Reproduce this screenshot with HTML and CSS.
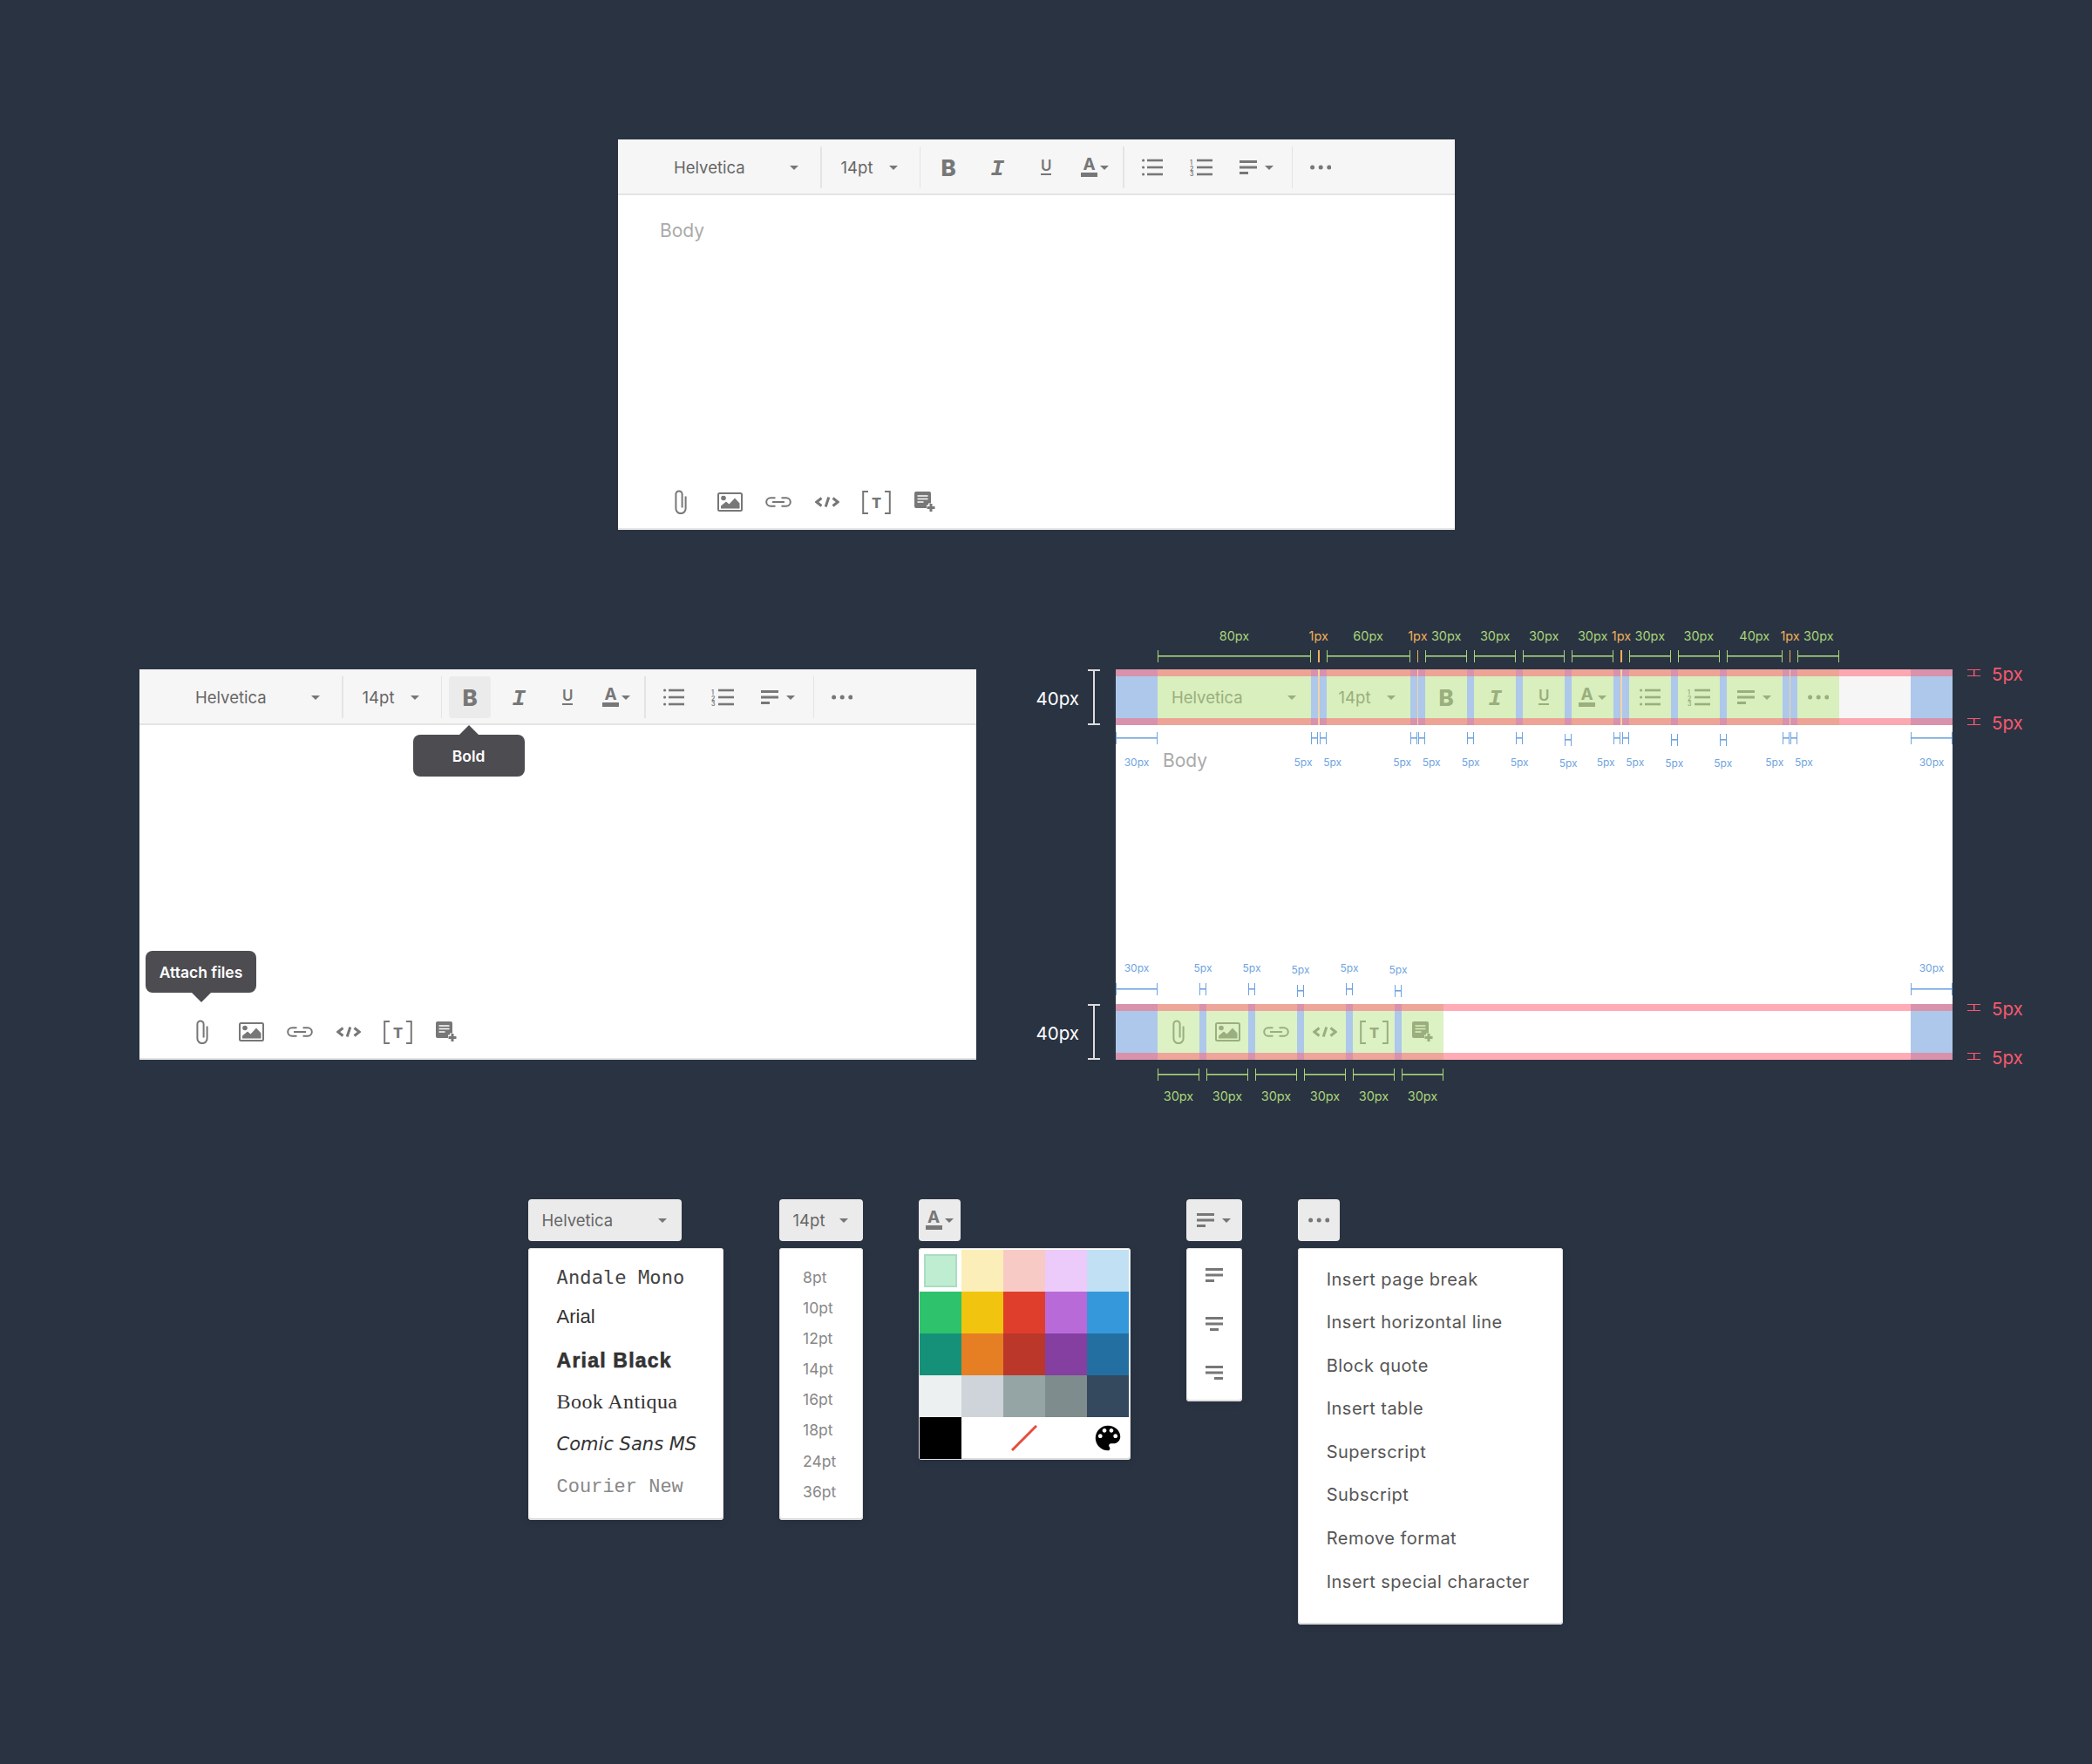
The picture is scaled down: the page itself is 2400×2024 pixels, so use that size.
FILE: index.html
```html
<!DOCTYPE html>
<html lang="en">
<head>
    <meta charset="UTF-8">
    <title>Editor toolbar spec</title>
    <link rel="stylesheet" href="styles.css">
</head>
<body>
<svg class="defs" aria-hidden="true">
    <symbol id="i-ul" viewBox="0 0 24 20">
        <circle cx="1.6" cy="2" r="1.6"/><circle cx="1.6" cy="10" r="1.6"/><circle cx="1.6" cy="18" r="1.6"/>
        <rect x="6" y=".7" width="18" height="2.6"/><rect x="6" y="8.7" width="18" height="2.6"/><rect x="6" y="16.7" width="18" height="2.6"/>
    </symbol>
    <symbol id="i-ol" viewBox="0 0 26 20">
        <rect x="8" y=".7" width="18" height="2.6"/><rect x="8" y="8.7" width="18" height="2.6"/><rect x="8" y="16.7" width="18" height="2.6"/>
    </symbol>
    <symbol id="i-left" viewBox="0 0 20 16">
        <rect width="20" height="3"/><rect y="6.5" width="20" height="3"/><rect y="13" width="10" height="3"/>
    </symbol>
    <symbol id="i-center" viewBox="0 0 20 16">
        <rect width="20" height="3"/><rect y="6.5" width="20" height="3"/><rect x="5" y="13" width="10" height="3"/>
    </symbol>
    <symbol id="i-right" viewBox="0 0 20 16">
        <rect width="20" height="3"/><rect y="6.5" width="20" height="3"/><rect x="10" y="13" width="10" height="3"/>
    </symbol>
    <symbol id="i-dots" viewBox="0 0 24 6">
        <circle cx="2.6" cy="3" r="2.5"/><circle cx="12.2" cy="3" r="2.5"/><circle cx="21.8" cy="3" r="2.5"/>
    </symbol>
    <symbol id="i-clip" viewBox="0 0 14 28">
        <path class="line" d="M12.600 7.500V21.500a5.600 5.600 0 0 1-11.200 0V5a3.600 3.600 0 0 1 7.200 0V20.500"/>
    </symbol>
    <symbol id="i-image" viewBox="0 0 29 22">
        <rect class="line" x="1" y="1" width="27" height="20" rx="1.5"/>
        <circle cx="7" cy="6.500" r="2.800"/>
        <path d="M4 18.500V15.500L10 10.500l3.500 3L20 6.500l5.500 6v6z"/>
    </symbol>
    <symbol id="i-link" viewBox="0 0 32 12">
        <path class="line" d="M12.500 1.200H7a4.800 4.800 0 0 0 0 9.600h5.500M19.500 1.200H25a4.800 4.800 0 0 1 0 9.600h-5.500M9 6h14"/>
    </symbol>
    <symbol id="i-code" viewBox="0 0 28 12">
        <path class="line thick" d="M7.500 1.500L1.800 6l5.700 4.500M20.500 1.500L26.200 6l-5.700 4.500M15.800.5L12.200 11.500"/>
    </symbol>
    <symbol id="i-bracket" viewBox="0 0 33 27">
        <path class="line" d="M7 1H1.200v25H7M26 1h5.800v25H26"/>
    </symbol>
    <symbol id="i-note" viewBox="0 0 24 24">
        <rect width="19" height="19" rx="2"/>
        <path class="hole" d="M3.500 5h12M3.500 8.500h12M3.500 12h7"/>
        <path class="hole wide" d="M19 13.500v10M14 18.500h10"/>
        <path class="line thick" d="M19 14v9M14.500 18.500h9"/>
    </symbol>
    <symbol id="i-palette" viewBox="0 0 24 24">
        <path d="M12 3c-4.970 0-9 4.030-9 9s4.030 9 9 9c.830 0 1.500-.670 1.500-1.500 0-.390-.150-.740-.390-1.010-.230-.260-.380-.610-.380-.990 0-.830.670-1.500 1.500-1.500H16c2.760 0 5-2.240 5-5 0-4.420-4.030-8-9-8zm-5.500 9c-.830 0-1.500-.670-1.500-1.500S5.670 9 6.500 9 8 9.670 8 10.500 7.330 12 6.500 12zm3-4C8.670 8 8 7.330 8 6.500S8.670 5 9.500 5s1.500.670 1.500 1.500S10.330 8 9.500 8zm5 0c-.830 0-1.500-.670-1.500-1.500S13.670 5 14.500 5s1.500.670 1.500 1.500S15.330 8 14.500 8zm3 4c-.830 0-1.500-.670-1.500-1.500S16.670 9 17.500 9s1.500.670 1.500 1.500-.670 1.500-1.500 1.500z"/>
    </symbol>
</svg>

<!-- plain editor -->
<section class="row-top">
    <div class="editor">
        <div class="toolbar">
            <div class="tool w-font drop"><span>Helvetica</span><i class="caret"></i></div>
            <div class="sep"></div>
            <div class="tool w-size drop"><span>14pt</span><i class="caret"></i></div>
            <div class="sep"></div>
            <div class="tool glyph-b">B</div>
            <div class="tool glyph-i">I</div>
            <div class="tool glyph-u"><span>U</span></div>
            <div class="tool"><span class="color-a">A</span><i class="caret small"></i></div>
            <div class="sep"></div>
            <div class="tool"><svg class="ic-ul"><use href="#i-ul"/></svg></div>
            <div class="tool"><svg class="ic-ol" viewBox="0 -4 26 28"><use href="#i-ol" width="26" height="20"/><text x="0" y="6.500" class="tiny">1</text><text x="0" y="13.500" class="tiny">2</text><text x="0" y="20" class="tiny">3</text></svg></div>
            <div class="tool w-align"><svg class="ic-align"><use href="#i-left"/></svg><i class="caret small"></i></div>
            <div class="sep"></div>
            <div class="tool"><svg class="ic-dots"><use href="#i-dots"/></svg></div>
        </div>
        <div class="content"><span class="placeholder">Body</span></div>
        <div class="bottombar">
            <div class="tool"><svg class="ic-clip"><use href="#i-clip"/></svg></div>
            <div class="tool"><svg class="ic-image"><use href="#i-image"/></svg></div>
            <div class="tool"><svg class="ic-link"><use href="#i-link"/></svg></div>
            <div class="tool"><svg class="ic-code"><use href="#i-code"/></svg></div>
            <div class="tool"><svg class="ic-bracket" viewBox="0 0 33 27"><use href="#i-bracket"/><text x="16.500" y="19.800" class="tee">T</text></svg></div>
            <div class="tool"><svg class="ic-note"><use href="#i-note"/></svg></div>
        </div>
    </div>
</section>

<section class="row-mid">
    <!-- tooltips -->
    <div class="editor editor-tips">
        <div class="toolbar">
            <div class="tool w-font drop"><span>Helvetica</span><i class="caret"></i></div>
            <div class="sep"></div>
            <div class="tool w-size drop"><span>14pt</span><i class="caret"></i></div>
            <div class="sep"></div>
            <div class="tool glyph-b active">B</div>
            <div class="tool glyph-i">I</div>
            <div class="tool glyph-u"><span>U</span></div>
            <div class="tool"><span class="color-a">A</span><i class="caret small"></i></div>
            <div class="sep"></div>
            <div class="tool"><svg class="ic-ul"><use href="#i-ul"/></svg></div>
            <div class="tool"><svg class="ic-ol" viewBox="0 -4 26 28"><use href="#i-ol" width="26" height="20"/><text x="0" y="6.500" class="tiny">1</text><text x="0" y="13.500" class="tiny">2</text><text x="0" y="20" class="tiny">3</text></svg></div>
            <div class="tool w-align"><svg class="ic-align"><use href="#i-left"/></svg><i class="caret small"></i></div>
            <div class="sep"></div>
            <div class="tool"><svg class="ic-dots"><use href="#i-dots"/></svg></div>
        </div>
        <div class="content"></div>
        <div class="bottombar">
            <div class="tool"><svg class="ic-clip"><use href="#i-clip"/></svg></div>
            <div class="tool"><svg class="ic-image"><use href="#i-image"/></svg></div>
            <div class="tool"><svg class="ic-link"><use href="#i-link"/></svg></div>
            <div class="tool"><svg class="ic-code"><use href="#i-code"/></svg></div>
            <div class="tool"><svg class="ic-bracket" viewBox="0 0 33 27"><use href="#i-bracket"/><text x="16.500" y="19.800" class="tee">T</text></svg></div>
            <div class="tool"><svg class="ic-note"><use href="#i-note"/></svg></div>
        </div>
        <div class="tip tip-bold">Bold</div>
        <div class="tip tip-attach">Attach files</div>
    </div>

    <!-- measured editor -->
    <div class="spec">
        <div class="dims dims-top">
            <div class="dim w-font"><span>80px</span><b></b></div>
            <div class="dim dim-sep"><span>1px</span><b></b></div>
            <div class="dim w-size"><span>60px</span><b></b></div>
            <div class="dim dim-sep"><span>1px</span><b></b></div>
            <div class="dim w-30"><span>30px</span><b></b></div>
            <div class="dim w-30"><span>30px</span><b></b></div>
            <div class="dim w-30"><span>30px</span><b></b></div>
            <div class="dim w-30"><span>30px</span><b></b></div>
            <div class="dim dim-sep"><span>1px</span><b></b></div>
            <div class="dim w-30"><span>30px</span><b></b></div>
            <div class="dim w-30"><span>30px</span><b></b></div>
            <div class="dim w-align"><span>40px</span><b></b></div>
            <div class="dim dim-sep"><span>1px</span><b></b></div>
            <div class="dim w-30"><span>30px</span><b></b></div>
        </div>

        <div class="editor">
            <div class="toolbar measured">
                <div class="tool w-font drop"><span>Helvetica</span><i class="caret"></i></div>
                <div class="sep"></div>
                <div class="tool w-size drop"><span>14pt</span><i class="caret"></i></div>
                <div class="sep"></div>
                <div class="tool glyph-b">B</div>
                <div class="tool glyph-i">I</div>
                <div class="tool glyph-u"><span>U</span></div>
                <div class="tool"><span class="color-a">A</span><i class="caret small"></i></div>
                <div class="sep"></div>
                <div class="tool"><svg class="ic-ul"><use href="#i-ul"/></svg></div>
                <div class="tool"><svg class="ic-ol" viewBox="0 -4 26 28"><use href="#i-ol" width="26" height="20"/><text x="0" y="6.500" class="tiny">1</text><text x="0" y="13.500" class="tiny">2</text><text x="0" y="20" class="tiny">3</text></svg></div>
                <div class="tool w-align"><svg class="ic-align"><use href="#i-left"/></svg><i class="caret small"></i></div>
                <div class="sep"></div>
                <div class="tool"><svg class="ic-dots"><use href="#i-dots"/></svg></div>
                <div class="rest"></div>
                <div class="size-note"><span>40px</span><i class="beam"></i></div>
                <div class="strip-note at-top"><i class="bar"></i><span>5px</span></div>
                <div class="strip-note at-bottom"><i class="bar"></i><span>5px</span></div>
            </div>

            <div class="content">
                <span class="placeholder">Body</span>
                <div class="marks marks-top">
                    <div class="mark w-30"><b></b><span>30px</span></div>
                    <div class="w-font"></div>
                    <div class="mark w-gap"><b></b><span class="to-left">5px</span></div>
                    <div class="w-sep"></div>
                    <div class="mark w-gap"><b></b><span class="to-right">5px</span></div>
                    <div class="w-size"></div>
                    <div class="mark w-gap"><b></b><span class="to-left">5px</span></div>
                    <div class="w-sep"></div>
                    <div class="mark w-gap"><b></b><span class="to-right">5px</span></div>
                    <div class="w-30"></div>
                    <div class="mark w-gap"><b></b><span>5px</span></div>
                    <div class="w-30"></div>
                    <div class="mark w-gap"><b></b><span>5px</span></div>
                    <div class="w-30"></div>
                    <div class="mark w-gap low"><b></b><span>5px</span></div>
                    <div class="w-30"></div>
                    <div class="mark w-gap"><b></b><span class="to-left">5px</span></div>
                    <div class="w-sep"></div>
                    <div class="mark w-gap"><b></b><span class="to-right">5px</span></div>
                    <div class="w-30"></div>
                    <div class="mark w-gap low"><b></b><span>5px</span></div>
                    <div class="w-30"></div>
                    <div class="mark w-gap low"><b></b><span>5px</span></div>
                    <div class="w-align"></div>
                    <div class="mark w-gap"><b></b><span class="to-left">5px</span></div>
                    <div class="w-sep"></div>
                    <div class="mark w-gap"><b></b><span class="to-right">5px</span></div>
                    <div class="grow"></div>
                    <div class="mark w-30"><b></b><span>30px</span></div>
                </div>
                <div class="marks marks-bottom">
                    <div class="mark w-30"><span>30px</span><b></b></div>
                    <div class="w-30"></div>
                    <div class="mark w-gap"><span>5px</span><b></b></div>
                    <div class="w-30"></div>
                    <div class="mark w-gap"><span>5px</span><b></b></div>
                    <div class="w-30"></div>
                    <div class="mark w-gap low"><span>5px</span><b></b></div>
                    <div class="w-30"></div>
                    <div class="mark w-gap"><span>5px</span><b></b></div>
                    <div class="w-30"></div>
                    <div class="mark w-gap low"><span>5px</span><b></b></div>
                    <div class="grow"></div>
                    <div class="mark w-30"><span>30px</span><b></b></div>
                </div>
            </div>

            <div class="bottombar measured">
                <div class="tool"><svg class="ic-clip"><use href="#i-clip"/></svg></div>
                <div class="tool"><svg class="ic-image"><use href="#i-image"/></svg></div>
                <div class="tool"><svg class="ic-link"><use href="#i-link"/></svg></div>
                <div class="tool"><svg class="ic-code"><use href="#i-code"/></svg></div>
                <div class="tool"><svg class="ic-bracket" viewBox="0 0 33 27"><use href="#i-bracket"/><text x="16.500" y="19.800" class="tee">T</text></svg></div>
                <div class="tool"><svg class="ic-note"><use href="#i-note"/></svg></div>
                <div class="rest white"></div>
                <div class="size-note"><span>40px</span><i class="beam"></i></div>
                <div class="strip-note at-top"><i class="bar"></i><span>5px</span></div>
                <div class="strip-note at-bottom"><i class="bar"></i><span>5px</span></div>
            </div>
        </div>

        <div class="dims dims-bottom">
            <div class="dim w-30"><b></b><span>30px</span></div>
            <div class="dim w-30"><b></b><span>30px</span></div>
            <div class="dim w-30"><b></b><span>30px</span></div>
            <div class="dim w-30"><b></b><span>30px</span></div>
            <div class="dim w-30"><b></b><span>30px</span></div>
            <div class="dim w-30"><b></b><span>30px</span></div>
        </div>
    </div>
</section>

<!-- dropdowns -->
<section class="row-menus">
    <div class="menu-col">
        <div class="menu-btn w-font drop"><span>Helvetica</span><i class="caret"></i></div>
        <ul class="menu fonts">
            <li class="f-andale">Andale Mono</li>
            <li class="f-arial">Arial</li>
            <li class="f-black">Arial Black</li>
            <li class="f-book">Book Antiqua</li>
            <li class="f-comic">Comic Sans MS</li>
            <li class="f-courier">Courier New</li>
        </ul>
    </div>
    <div class="menu-col">
        <div class="menu-btn w-size drop"><span>14pt</span><i class="caret"></i></div>
        <ul class="menu sizes">
            <li>8pt</li><li>10pt</li><li>12pt</li><li>14pt</li><li>16pt</li><li>18pt</li><li>24pt</li><li>36pt</li>
        </ul>
    </div>
    <div class="menu-col">
        <div class="menu-btn w-30 center"><span class="color-a">A</span><i class="caret small"></i></div>
        <div class="menu palette">
            <div class="swatch picked"><i></i></div>
            <div class="swatch c1"></div><div class="swatch c2"></div><div class="swatch c3"></div><div class="swatch c4"></div>
            <div class="swatch c5"></div><div class="swatch c6"></div><div class="swatch c7"></div><div class="swatch c8"></div><div class="swatch c9"></div>
            <div class="swatch c10"></div><div class="swatch c11"></div><div class="swatch c12"></div><div class="swatch c13"></div><div class="swatch c14"></div>
            <div class="swatch c15"></div><div class="swatch c16"></div><div class="swatch c17"></div><div class="swatch c18"></div><div class="swatch c19"></div>
            <div class="swatch c20"></div>
            <div class="swatch"></div>
            <div class="swatch"><svg class="ic-slash" viewBox="0 0 30 30"><path d="M1 29L29 1"/></svg></div>
            <div class="swatch"></div>
            <div class="swatch"><svg class="ic-palette"><use href="#i-palette"/></svg></div>
        </div>
    </div>
    <div class="menu-col">
        <div class="menu-btn w-align center"><svg class="ic-align"><use href="#i-left"/></svg><i class="caret small"></i></div>
        <div class="menu aligns">
            <div><svg class="ic-align"><use href="#i-left"/></svg></div>
            <div><svg class="ic-align"><use href="#i-center"/></svg></div>
            <div><svg class="ic-align"><use href="#i-right"/></svg></div>
        </div>
    </div>
    <div class="menu-col">
        <div class="menu-btn w-30 center"><svg class="ic-dots"><use href="#i-dots"/></svg></div>
        <ul class="menu more">
            <li>Insert page break</li>
            <li>Insert horizontal line</li>
            <li>Block quote</li>
            <li>Insert table</li>
            <li>Superscript</li>
            <li>Subscript</li>
            <li>Remove format</li>
            <li>Insert special character</li>
        </ul>
    </div>
</section>
</body>
</html>
```

FILE: styles.css
```css
* {
    box-sizing: border-box;
}
body {
    margin: 0;
    min-height: 2024px;
    background-color: #2a3342;
    font-family: "Inter", "Liberation Sans", sans-serif;
    color: #666;
}
.defs {
    position: absolute;
    width: 0;
    height: 0;
}
svg {
    display: block;
    fill: currentColor;
    color: #777;
    --hole: #fff;
}
.line {
    fill: none;
    stroke: currentColor;
    stroke-width: 2;
}
.thick {
    stroke-width: 3;
}
.hole {
    fill: none;
    stroke: var(--hole);
    stroke-width: 1.6;
}
.hole.wide {
    stroke-width: 6;
}
.tiny {
    font: 600 7px "Inter", sans-serif;
}
.tee {
    font: 800 16.500px "Inter", sans-serif;
    text-anchor: middle;
}

/* rows */
.row-top {
    padding: 160px 0 0 709px;
}
.row-mid {
    display: flex;
    gap: 160px;
    padding: 112px 0 0 160px;
}
.row-menus {
    display: flex;
    align-items: flex-start;
    gap: 64px;
    padding: 104px 0 0 605.6px;
}

/* editor */
.editor {
    position: relative;
    display: flex;
    flex-direction: column;
    width: 960px;
    height: 448px;
    background: #fff;
}
.editor-tips {
    margin-top: 48px;
}
.toolbar {
    display: flex;
    gap: 8px;
    height: 64px;
    padding: 8px 0 6px 48px;
    background: #f6f6f6;
    border-bottom: 2px solid #e4e4e4;
}
.bottombar {
    display: flex;
    gap: 8px;
    height: 64px;
    padding: 8px 0 6px 48px;
    border-bottom: 2px solid #e4e4e4;
}
.content {
    position: relative;
    flex: 1;
    padding: 26px 48px;
}
.placeholder {
    font-size: 21px;
    line-height: 30px;
    color: #aaa;
}
.spec .placeholder {
    margin-left: 6px;
}
.tool {
    display: flex;
    align-items: center;
    justify-content: center;
    flex: none;
    width: 48px;
    border-radius: 4px;
    font-size: 18.500px;
}
.tool.active {
    background: #ebebeb;
}
.sep {
    flex: none;
    width: 1.6px;
    background: #e4e4e4;
}
.w-font { width: 176px; flex: none; }
.w-size { width: 96px; flex: none; }
.w-align { width: 64px; flex: none; }
.w-30 { width: 48px; flex: none; }
.w-gap { width: 8px; flex: none; }
.w-sep { width: 1.6px; flex: none; }
.grow { flex: 1; }
.tool.w-font { width: 176px; }
.tool.w-size { width: 96px; }
.tool.w-align { width: 64px; gap: 9px; }
.drop {
    justify-content: space-between;
    padding: 0 17px 0 16px;
}
.tool.w-size.drop {
    padding-left: 14px;
}
.caret {
    flex: none;
    width: 0;
    height: 0;
    border: 5px solid transparent;
    border-top-color: currentColor;
    border-bottom-width: 0;
    color: #777;
}
.caret.small {
    margin-left: 3px;
}
.tool.w-align .caret.small {
    margin-left: 0;
}

/* toolbar glyphs */
.glyph-b {
    font-size: 26px;
    font-weight: 800;
    color: #777;
}
.glyph-i {
    font-family: "Liberation Mono", monospace;
    font-size: 26px;
    line-height: 26px;
    font-weight: 700;
    font-style: italic;
    color: #777;
    padding-top: 3px;
}
.glyph-u span {
    font-size: 17px;
    line-height: 15px;
    font-weight: 600;
    color: #777;
    border-bottom: 2px solid #777;
    padding: 0 0 1px;
}
.color-a {
    width: 19px;
    height: 22px;
    font-size: 19px;
    line-height: 15px;
    font-weight: 700;
    color: #777;
    text-align: center;
    border-bottom: 5px solid #777;
}

/* icon sizes */
.ic-ul { width: 24px; height: 20px; }
.ic-ol { width: 26px; height: 28px; }
.ic-align { width: 20px; height: 16px; flex: none; }
.ic-dots { width: 24px; height: 6px; }
.ic-clip { width: 14px; height: 28px; }
.ic-image { width: 29px; height: 22px; }
.ic-link { width: 32px; height: 12px; }
.ic-code { width: 28px; height: 12px; }
.ic-bracket { width: 33px; height: 27px; }
.ic-note { width: 24px; height: 24px; }

/* tooltips */
.tip {
    position: absolute;
    display: flex;
    align-items: center;
    justify-content: center;
    height: 48px;
    background: #4d4c51;
    border-radius: 8px;
    color: #fff;
    font-size: 17.500px;
    font-weight: 600;
}
.tip::after {
    content: "";
    position: absolute;
    left: 50%;
    margin-left: -11px;
    border: 11px solid transparent;
}
.tip-bold {
    left: 313.6px;
    top: 75px;
    width: 128px;
}
.tip-bold::after {
    bottom: 100%;
    border-top-width: 0;
    border-bottom-color: #4d4c51;
}
.tip-attach {
    left: 7px;
    top: 323px;
    width: 127px;
}
.tip-attach::after {
    top: 100%;
    border-bottom-width: 0;
    border-top-color: #4d4c51;
}

/* measured bars */
.spec {
    width: 960px;
}
.measured {
    position: relative;
    padding: 0 0 0 48px;
    border: 0;
    background: #adc8ea;
    color: #9aae7e;
}
.measured::before,
.measured::after {
    content: "";
    position: absolute;
    left: 0;
    right: 0;
    height: 8px;
    background: rgba(255, 98, 117, .53);
}
.measured::before { top: 0; }
.measured::after { bottom: 0; }
.measured .tool {
    background: #d9efbd;
    border-radius: 0;
    color: #9aae7e;
}
.measured.bottombar .tool {
    background: #dcf2c4;
}
.measured svg,
.measured .caret,
.measured .tool span {
    color: #9aae7e;
    border-color: #9aae7e;
    --hole: #d9efbd;
}
.measured .caret {
    border-color: transparent;
    border-top-color: #9aae7e;
}
.measured .sep {
    background: #f4d3a6;
    z-index: 1;
}
.measured .rest {
    flex: 1;
    margin: 0 48px 0 -8px;
    background: #f6f6f6;
}
.measured .rest.white {
    background: #fff;
}
.size-note {
    position: absolute;
    right: 100%;
    top: 0;
    bottom: 0;
    display: flex;
    align-items: center;
    gap: 10px;
    margin-right: 18px;
    color: #fff;
    font-size: 20.500px;
    white-space: nowrap;
}
.size-note span {
    padding-top: 2px;
}
.beam {
    width: 14px;
    height: 100%;
    border-top: 2px solid #ddd;
    border-bottom: 2px solid #ddd;
    background: linear-gradient(#ddd, #ddd) center / 2px 100% no-repeat;
}
.strip-note {
    position: absolute;
    left: 100%;
    height: 8px;
    display: flex;
    align-items: center;
    gap: 13px;
    margin-left: 17px;
    color: #f6596e;
    font-size: 20.500px;
}
.strip-note.at-top { top: 0; }
.strip-note.at-bottom { bottom: 0; }
.strip-note span {
    padding-top: 2px;
}
.strip-note .bar {
    width: 15px;
    height: 8px;
    border-top: 1.5px solid #f6596e;
    border-bottom: 1.5px solid #f6596e;
    background: linear-gradient(#f6596e, #f6596e) center / 1.5px 100% no-repeat;
}

/* green and orange dimensions */
.dims {
    display: flex;
    gap: 8px;
    padding-left: 48px;
    color: #a9d578;
    font-size: 14.500px;
    line-height: 20px;
}
.dim {
    display: flex;
    flex-direction: column;
    align-items: center;
    white-space: nowrap;
}
.dim b {
    display: block;
    flex: none;
    width: 100%;
    height: 14px;
    border-left: 1.6px solid #a9d578;
    border-right: 1.6px solid #a9d578;
    background: linear-gradient(#a9d578, #a9d578) center / 100% 1.6px no-repeat;
}
.dim-sep {
    flex: none;
    width: 1.6px;
    color: #f0b05a;
}
.dim-sep b {
    border: 0;
    background: #f0b05a;
}
.dims-top {
    height: 48px;
}
.dims-top b {
    margin-top: 6px;
}
.dims-bottom {
    padding-top: 10px;
    height: 56px;
}
.dims-bottom b {
    margin-bottom: 8px;
}

/* blue gap marks */
.marks {
    position: absolute;
    left: 0;
    right: 0;
    display: flex;
    color: #6ea3e0;
    font-size: 12px;
    line-height: 16px;
}
.marks-top {
    top: 8px;
}
.marks-bottom {
    bottom: 10px;
}
.mark {
    display: flex;
    flex-direction: column;
    align-items: center;
    white-space: nowrap;
}
.mark b {
    display: block;
    flex: none;
    width: 100%;
    height: 14px;
    border-left: 1.6px solid #6ea3e0;
    border-right: 1.6px solid #6ea3e0;
    background: linear-gradient(#6ea3e0, #6ea3e0) center / 100% 1.6px no-repeat;
}
.marks-top span {
    margin-top: 13px;
}
.marks-bottom span {
    margin-bottom: 9px;
}
.marks-top .low b {
    margin-top: 2px;
}
.marks-top .low span {
    margin-top: 12px;
}
.marks-bottom .low {
    transform: translateY(2px);
}
.to-left {
    transform: translateX(-13px);
}
.to-right {
    transform: translateX(11px);
}

/* dropdown menus */
.menu-col {
    display: flex;
    flex-direction: column;
    align-items: flex-start;
    gap: 8px;
}
.menu-btn {
    display: flex;
    align-items: center;
    height: 48px;
    background: #ebebeb;
    border-radius: 4px;
    font-size: 18.500px;
}
.menu-btn.center {
    justify-content: center;
}
.menu-btn.w-align {
    gap: 9px;
}
.menu-btn.w-align .caret {
    margin: 0;
}
.menu {
    margin: 0;
    list-style: none;
    background: #fff;
    border-radius: 4px;
    box-shadow: inset 0 0 0 1px #e2e2e2, inset 0 -1px 0 1px #dcdcdc, 0 2px 10px rgba(0, 0, 0, .1);
}
.fonts {
    width: 224px;
    height: 312px;
    padding: 9px 0 0 33px;
    color: #333;
    font-size: 22px;
}
.fonts li {
    display: flex;
    align-items: center;
    height: 48px;
    white-space: nowrap;
}
.f-andale { font-family: "DejaVu Sans Mono", monospace; letter-spacing: .1px; color: #444; }
.f-arial { font-family: "Liberation Sans", sans-serif; padding-bottom: 4px; }
.f-black {
    font-family: "Liberation Sans", sans-serif;
    font-size: 23px;
    font-weight: 700;
    letter-spacing: 1.2px;
    -webkit-text-stroke: .6px #333;
}
.f-book {
    font-family: "Liberation Serif", serif;
    font-size: 24px;
    letter-spacing: .4px;
    padding-bottom: 2px;
}
.f-comic {
    font-family: "DejaVu Sans", sans-serif;
    font-size: 21px;
    font-style: italic;
}
.f-courier {
    font-family: "Liberation Mono", monospace;
    color: #888;
    padding-top: 2px;
}
.sizes {
    width: 96px;
    height: 312px;
    padding: 15.500px 0 0 27.500px;
    color: #888;
    font-size: 17.500px;
}
.sizes li {
    height: 35.200px;
    line-height: 35.200px;
}
.palette {
    display: grid;
    grid-template-columns: repeat(5, 48px);
    grid-auto-rows: 48px;
    padding: 1.600px;
}
.swatch {
    display: flex;
    align-items: center;
    justify-content: center;
}
.swatch.picked i {
    width: 38px;
    height: 38px;
    background: #bfedd2;
    border: 2px solid #abdcc2;
}
.c1 { background: #fbeeb8; }
.c2 { background: #f8cac6; }
.c3 { background: #eccafa; }
.c4 { background: #c2e0f4; }
.c5 { background: #2dc26b; }
.c6 { background: #f1c40f; }
.c7 { background: #e03e2d; }
.c8 { background: #b96ad9; }
.c9 { background: #3598db; }
.c10 { background: #169179; }
.c11 { background: #e67e23; }
.c12 { background: #ba372a; }
.c13 { background: #843fa1; }
.c14 { background: #236fa1; }
.c15 { background: #ecf0f1; }
.c16 { background: #ced4d9; }
.c17 { background: #95a5a6; }
.c18 { background: #7e8c8d; }
.c19 { background: #34495e; }
.c20 { background: #000; }
.ic-slash {
    width: 30px;
    height: 30px;
    fill: none;
    stroke: #e74c3c;
    stroke-width: 3;
}
.ic-palette {
    width: 38px;
    height: 38px;
    color: #000;
}
.aligns {
    width: 64px;
    height: 176px;
    padding-top: 3px;
}
.aligns div {
    display: flex;
    align-items: center;
    justify-content: center;
    height: 56px;
}
.more {
    width: 304px;
    height: 432px;
    padding: 11.500px 0 0 33px;
    color: #555;
    font-size: 20px;
    letter-spacing: .45px;
}
.more li {
    height: 49.600px;
    line-height: 49.600px;
    white-space: nowrap;
}
```
